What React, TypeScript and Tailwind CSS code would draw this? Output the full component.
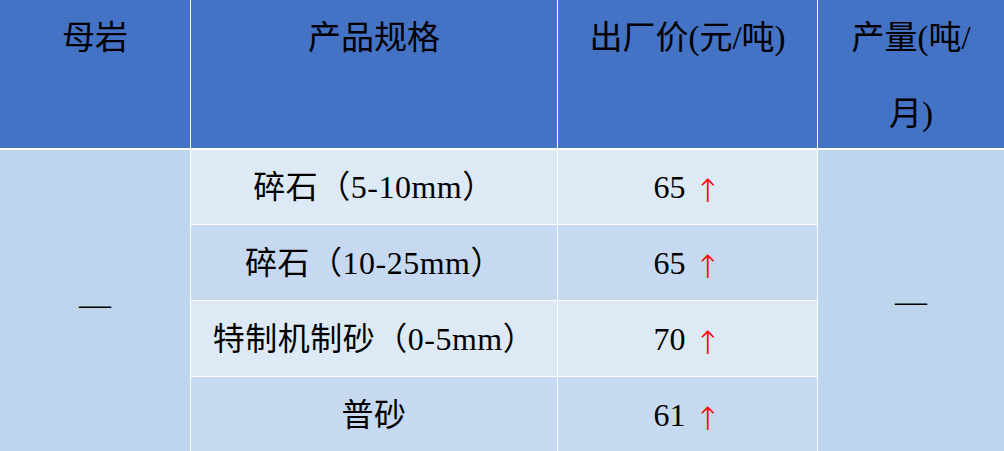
import React from 'react'

const rows = [
  { spec: '碎石（5-10mm）', price: '65', light: true },
  { spec: '碎石（10-25mm）', price: '65', light: false },
  { spec: '特制机制砂（0-5mm）', price: '70', light: true },
  { spec: '普砂', price: '61', light: false },
]

const headFont = "font-['Liberation_Serif','Noto_Sans_CJK_SC',sans-serif]"
const bodyFont = "font-['Liberation_Serif','Noto_Sans_CJK_SC',serif]"

export default function App() {
  return (
    <div className="w-[1004px] bg-white">
      <div className="grid grid-cols-[190px_366px_259px_186px] grid-rows-[148px_75px_75px_75px_75px] gap-x-[1px] gap-y-[1px] bg-white text-black">
        {/* header */}
        <div className={`bg-[#4472c4] text-center text-[33px] leading-[76px] ${headFont}`}>母岩</div>
        <div className={`bg-[#4472c4] text-center text-[33px] leading-[76px] ${headFont}`}>产品规格</div>
        <div className={`bg-[#4472c4] text-center text-[33px] leading-[76px] ${headFont}`}>出厂价(元/吨)</div>
        <div className={`bg-[#4472c4] text-center text-[33px] leading-[76px] ${headFont}`}>
          产量(吨/
          <br />
          月)
        </div>

        {/* merged first column */}
        <div
          className={`row-start-2 row-span-4 col-start-1 mt-[1px] flex items-center justify-center bg-[#bdd6ee] text-[32px] ${bodyFont}`}
        >
          <span className="translate-y-[3px]">—</span>
        </div>

        {rows.map((r, i) => (
          <React.Fragment key={r.spec}>
            <div
              className={`col-start-2 flex items-center justify-center text-[32px] tracking-[0.5px] ${bodyFont} ${
                r.light ? 'bg-[#ddeaf6]' : 'bg-[#c6d9f0]'
              } ${i === 0 ? 'mt-[1px]' : ''}`}
              style={{ gridRowStart: i + 2 }}
            >
              {r.spec}
            </div>
            <div
              className={`col-start-3 flex items-center justify-center text-[32px] ${bodyFont} ${
                r.light ? 'bg-[#ddeaf6]' : 'bg-[#c6d9f0]'
              } ${i === 0 ? 'mt-[1px]' : ''}`}
              style={{ gridRowStart: i + 2 }}
            >
              <span>{r.price}</span>
              <span className="ml-[9px] translate-y-[4px] text-[32px] text-[#ff0000] font-['DejaVu_Sans',sans-serif] font-light">↑</span>
            </div>
          </React.Fragment>
        ))}

        {/* merged last column */}
        <div
          className={`row-start-2 row-span-4 col-start-4 mt-[1px] flex items-center justify-center bg-[#bdd6ee] text-[32px] ${bodyFont}`}
        >
          —
        </div>
      </div>
    </div>
  )
}
